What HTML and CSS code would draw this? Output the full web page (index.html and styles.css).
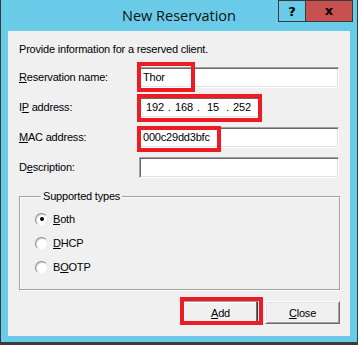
FILE: index.html
```html
<!DOCTYPE html>
<html>
<head>
<meta charset="utf-8">
<link rel="stylesheet" href="styles.css">
</head>
<body>
<div class="window">
  <div class="titlebar">
    <div class="title">New Reservation</div>
    <div class="caption-buttons">
      <span class="cbtn help">?</span>
      <span class="cbtn close">x</span>
    </div>
  </div>
  <div class="panel">
    <p class="intro">Provide information for a reserved client.</p>
    <div class="form">
      <div class="row">
        <span class="label"><u>R</u>eservation name:</span>
        <div class="field">
          <div class="textbox">Thor</div>
          <span class="mark mark-name"></span>
        </div>
      </div>
      <div class="row">
        <span class="label">I<u>P</u> address:</span>
        <div class="field">
          <div class="ipbox">
            <span class="octet">192</span><span class="dot">.</span><span class="octet">168</span><span class="dot">.</span><span class="octet">15</span><span class="dot">.</span><span class="octet">252</span>
          </div>
          <span class="mark mark-ip"></span>
        </div>
      </div>
      <div class="row">
        <span class="label"><u>M</u>AC address:</span>
        <div class="field">
          <div class="textbox">000c29dd3bfc</div>
          <span class="mark mark-mac"></span>
        </div>
      </div>
      <div class="row">
        <span class="label">D<u>e</u>scription:</span>
        <div class="field">
          <div class="textbox"></div>
        </div>
      </div>
    </div>
    <fieldset class="group">
      <legend>Supported types</legend>
      <div class="radio-row"><span class="radio checked"></span><span><u>B</u>oth</span></div>
      <div class="radio-row"><span class="radio"></span><span><u>D</u>HCP</span></div>
      <div class="radio-row"><span class="radio"></span><span>B<u>O</u>OTP</span></div>
    </fieldset>
    <div class="buttons">
      <div class="btn-wrap">
        <button class="btn default"><u>A</u>dd</button>
        <span class="mark mark-add"></span>
      </div>
      <button class="btn"><u>C</u>lose</button>
    </div>
  </div>
</div>
</body>
</html>
```

FILE: styles.css
```css
* { box-sizing: border-box; }
html, body { margin: 0; padding: 0; }
body {
  width: 358px;
  height: 345px;
  overflow: hidden;
  font-family: "Liberation Sans", Arial, sans-serif;
  font-size: 11px;
  letter-spacing: -0.2px;
  color: #000;
}
.window {
  width: 358px;
  height: 345px;
  background: #6acbe9;
  border-left: 1px solid #3a3a3a;
  border-right: 1px solid #3a3a3a;
  border-bottom: 3px solid #3a3a3a;
  display: flex;
  flex-direction: column;
}
.titlebar {
  height: 31px;
  display: grid;
  grid-template-columns: 1fr auto 1fr;
  align-items: start;
}
.title {
  grid-column: 2;
  font-family: "Open Sans", "Noto Sans", sans-serif;
  font-size: 14.5px;
  letter-spacing: 0;
  line-height: 20px;
  padding-top: 6px;
  color: #111;
}
.caption-buttons {
  grid-column: 3;
  justify-self: end;
  display: flex;
  margin-right: 4px;
  border: 1px solid #3a3a3a;
  border-top: 1px solid #3a3a3a;
}
.cbtn {
  height: 20px;
  display: flex;
  align-items: center;
  justify-content: center;
  font-family: "DejaVu Sans", sans-serif;
  font-weight: bold;
  font-size: 13px;
  letter-spacing: 0;
  line-height: 1;
}
.help { width: 27px; border-right: 1px solid #3a3a3a; }
.close { width: 46px; background: #c75050; padding-bottom: 2px; }
.panel {
  margin: 0 7px;
  height: 305px;
  background: #f0f0f0;
  padding: 12px 11px 0 11px;
}
.intro {
  margin: 0;
  line-height: 13px;
}
.form {
  margin-top: 11px;
  display: flex;
  flex-direction: column;
  gap: 9px;
}
.row {
  display: grid;
  grid-template-columns: 120px 200px;
  height: 21px;
}
.label { line-height: 21px; }
.field { position: relative; height: 21px; }
.textbox {
  width: 200px;
  height: 21px;
  background: #fff;
  border: 1px solid;
  border-color: #a0a0a0 #fff #fff #a0a0a0;
  box-shadow: inset 1px 1px 0 #696969, inset -1px -1px 0 #e3e3e3;
  padding: 1px 3px;
  line-height: 17px;
}
.ipbox {
  width: 121px;
  height: 21px;
  background: #fff;
  border: 1px solid;
  border-color: #a0a0a0 #fff #fff #a0a0a0;
  box-shadow: inset 1px 1px 0 #696969, inset -1px -1px 0 #e3e3e3;
  padding: 1px 3px;
  line-height: 17px;
  display: flex;
}
.octet { width: 24px; text-align: center; }
.dot { width: 5px; text-align: center; }
.mark {
  position: absolute;
  border: 4px solid #ed1c24;
  pointer-events: none;
}
.mark-name { left: -2px; top: -5px; width: 58px; height: 30px; }
.mark-ip { left: -2px; top: -3px; width: 125px; height: 28px; }
.mark-mac { left: -2px; top: -1px; width: 84px; height: 26px; }
.group {
  margin: 12px 0 0 0;
  padding: 4px 0 0 15px;
  width: 321px;
  height: 100px;
  border: 1px solid #a0a0a0;
  box-shadow: inset 1px 1px 0 #fff, 1px 1px 0 #fff;
  min-width: 0;
}
.group legend {
  padding: 0 2px;
  margin-left: 6px;
  line-height: 13px;
  background: #f0f0f0;
}
.radio-row {
  display: flex;
  align-items: center;
  height: 24px;
  gap: 5px;
}
.radio {
  width: 13px;
  height: 13px;
  border-radius: 50%;
  background: #fff;
  border: 1px solid;
  border-color: #8a8a8a #e6e6e6 #f4f4f4 #8a8a8a;
  box-shadow: inset 1px 1px 0 #d8d8d8;
  display: flex;
  align-items: center;
  justify-content: center;
}
.radio.checked::after {
  content: "";
  width: 4px;
  height: 4px;
  border-radius: 50%;
  background: #000;
}
.buttons {
  margin-top: 11px;
  display: flex;
  justify-content: flex-end;
  gap: 7px;
  padding-right: 0;
  margin-right: -1px;
}
.btn-wrap { position: relative; }
.btn {
  width: 75px;
  height: 23px;
  font-family: "Liberation Sans", Arial, sans-serif;
  font-size: 11px;
  letter-spacing: -0.2px;
  color: #000;
  background: #f0f0f0;
  border: 1px solid;
  border-color: #fff #696969 #696969 #fff;
  box-shadow: inset 1px 1px 0 #e3e3e3, inset -1px -1px 0 #a0a0a0;
  padding: 0;
  display: block;
}
.btn.default {
  border-color: #a0a0a0 #404040 #404040 #a0a0a0;
  box-shadow: inset -1px -1px 0 #696969, inset 1px 1px 0 #fff;
}
.mark-add { left: -3px; top: -4px; width: 83px; height: 28px; }
```
